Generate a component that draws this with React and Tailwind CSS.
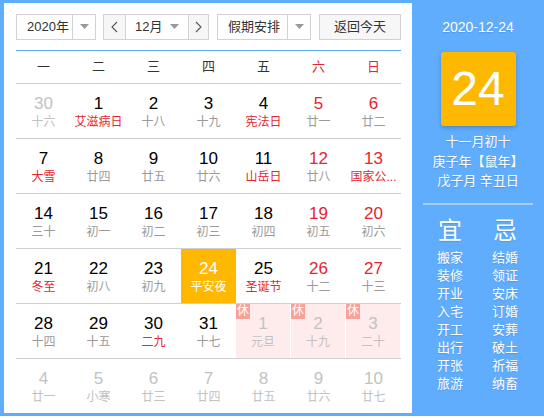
import React from "react";

const FONT = "font-['Liberation_Sans','Noto_Sans_CJK_SC',sans-serif]";

const rows = [
  [
    { d: 30, l: "十六", o: true },
    { d: 1, l: "艾滋病日", lr: true },
    { d: 2, l: "十八" },
    { d: 3, l: "十九" },
    { d: 4, l: "宪法日", lr: true },
    { d: 5, l: "廿一", w: true },
    { d: 6, l: "廿二", w: true },
  ],
  [
    { d: 7, l: "大雪", lr: true },
    { d: 8, l: "廿四" },
    { d: 9, l: "廿五" },
    { d: 10, l: "廿六" },
    { d: 11, l: "山岳日", lr: true },
    { d: 12, l: "廿八", w: true },
    { d: 13, l: "国家公...", w: true, lr: true },
  ],
  [
    { d: 14, l: "三十" },
    { d: 15, l: "初一" },
    { d: 16, l: "初二" },
    { d: 17, l: "初三" },
    { d: 18, l: "初四" },
    { d: 19, l: "初五", w: true },
    { d: 20, l: "初六", w: true },
  ],
  [
    { d: 21, l: "冬至", lr: true },
    { d: 22, l: "初八" },
    { d: 23, l: "初九" },
    { d: 24, l: "平安夜", sel: true },
    { d: 25, l: "圣诞节", lr: true },
    { d: 26, l: "十二", w: true },
    { d: 27, l: "十三", w: true },
  ],
  [
    { d: 28, l: "十四" },
    { d: 29, l: "十五" },
    { d: 30, l: "二九", lr: true },
    { d: 31, l: "十七" },
    { d: 1, l: "元旦", o: true, h: true },
    { d: 2, l: "十九", o: true, h: true },
    { d: 3, l: "二十", o: true, h: true },
  ],
  [
    { d: 4, l: "廿一", o: true },
    { d: 5, l: "小寒", o: true },
    { d: 6, l: "廿三", o: true },
    { d: 7, l: "廿四", o: true },
    { d: 8, l: "廿五", o: true },
    { d: 9, l: "廿六", o: true },
    { d: 10, l: "廿七", o: true },
  ],
];

const yi = ["搬家", "装修", "开业", "入宅", "开工", "出行", "开张", "旅游"];
const ji = ["结婚", "领证", "安床", "订婚", "安葬", "破土", "祈福", "纳畜"];

function Caret() {
  return (
    <svg width="9" height="5" viewBox="0 0 9 5">
      <path d="M0 0 L9 0 L4.5 5 Z" fill="#999" />
    </svg>
  );
}

function Chevron({ dir }) {
  return (
    <svg width="7" height="12" viewBox="0 0 7 12">
      <path
        d={dir === "left" ? "M6 1 L1 6 L6 11" : "M1 1 L6 6 L1 11"}
        fill="none"
        stroke="#555"
        strokeWidth="1.1"
      />
    </svg>
  );
}

function Cell({ c }) {
  let numColor = "text-black";
  let lunColor = "text-[#9a9a9a]";
  if (c.o) {
    numColor = "text-[#c2c2c2]";
    lunColor = "text-[#c2c2c2]";
  } else if (c.sel) {
    numColor = "text-white";
    lunColor = "text-white";
  } else {
    if (c.w) numColor = "text-[#e3262f]";
    if (c.lr) lunColor = "text-[#e3262f]";
  }
  const bg = c.sel ? "bg-[#ffb800]" : c.h ? "bg-[#feecec]" : "";
  return (
    <div className={`relative h-full flex flex-col items-center pt-[10px] ${c.h ? "mr-[1px]" : ""} ${bg}`}>
      {c.h && (
        <div className="absolute left-0 top-0 w-[14px] h-[15px] bg-[#f8a199] text-white text-[12px] leading-[15px] text-center">
          休
        </div>
      )}
      <div className={`text-[17px] leading-[20px] ${numColor}`}>{c.d}</div>
      <div className={`text-[12px] leading-[16px] whitespace-nowrap ${lunColor}`}>{c.l}</div>
    </div>
  );
}

export default function App() {
  const weekdays = ["一", "二", "三", "四", "五", "六", "日"];
  return (
    <div className={`w-[544px] h-[416px] bg-[#60adfd] flex ${FONT}`}>
      <div className="mt-[3px] ml-[4px] mb-[3px] w-[408px] bg-white pl-[12px] pr-[11px] pt-[11px] flex flex-col">
        {/* header */}
        <div className="flex h-[26px] text-[13px] text-[#333]">
          <div className="w-[80px] h-full border border-[#d2d2d2] flex">
            <div className="w-[55px] flex items-center pl-[10px] leading-none">2020年</div>
            <div className="flex-1 border-l border-[#d2d2d2] flex items-center justify-center">
              <Caret />
            </div>
          </div>
          <div className="ml-[7px] w-[106px] h-full border border-[#d2d2d2] flex">
            <div className="w-[22px] bg-[#f6f6f6] border-r border-[#d2d2d2] flex items-center justify-center">
              <Chevron dir="left" />
            </div>
            <div className="w-[62px] flex items-center pl-[9px]">
              <span className="leading-none">12月</span>
              <span className="ml-[8px] flex"><Caret /></span>
            </div>
            <div className="flex-1 bg-[#f6f6f6] border-l border-[#d2d2d2] flex items-center justify-center">
              <Chevron dir="right" />
            </div>
          </div>
          <div className="ml-[8px] w-[94px] h-full border border-[#d2d2d2] flex">
            <div className="w-[69px] flex items-center pl-[10px] leading-none">假期安排</div>
            <div className="flex-1 border-l border-[#d2d2d2] flex items-center justify-center">
              <Caret />
            </div>
          </div>
          <div className="ml-[8px] w-[82px] h-full border border-[#d2d2d2] bg-[#f7f7f7] flex items-center justify-center leading-none">
            返回今天
          </div>
        </div>
        <div className="mt-[10px] h-[1.5px] bg-[#5aaaf8]" />
        {/* weekdays */}
        <div className="grid grid-cols-7 h-[33px] border-b border-[#cfcfcf] text-[13px]">
          {weekdays.map((w, i) => (
            <div key={w} className={`flex items-center justify-center ${i >= 5 ? "text-[#e3262f]" : "text-[#333]"}`}>
              {w}
            </div>
          ))}
        </div>
        {/* days */}
        <div className="flex flex-col">
          {rows.map((r, ri) => (
            <div
              key={ri}
              className={`grid grid-cols-7 ${ri < 5 ? "h-[55px] border-b border-[#cfcfcf]" : "h-[54px]"}`}
            >
              {r.map((c, ci) => (
                <Cell key={ci} c={c} />
              ))}
            </div>
          ))}
        </div>
      </div>
      {/* right panel */}
      <div className="flex-1 flex flex-col items-center pt-[17px] text-white [text-shadow:0_1px_1px_rgba(0,0,0,0.12)]">
        <div className="text-[14px] leading-[20px]">2020-12-24</div>
        <div className="mt-[15px] w-[75px] h-[74px] bg-[#ffb800] rounded-[3px] shadow-[0_2px_4px_rgba(0,0,0,0.2)] flex items-center justify-center text-[48px] leading-none [text-shadow:none]">
          24
        </div>
        <div className="mt-[6px] flex flex-col items-center text-[13px] leading-[19.5px]">
          <div>十一月初十</div>
          <div>庚子年【鼠年】</div>
          <div>戊子月 辛丑日</div>
        </div>
        <div className="mt-[12px] w-[110px] h-[2px] bg-[#a6cffa]" />
        <div className="mt-[12px] grid grid-cols-[55px_55px] ml-[-1px]">
          <div className="text-center text-[24px] leading-[28px]">宜</div>
          <div className="text-center text-[24px] leading-[28px]">忌</div>
          <div className="mt-[4px] flex flex-col items-center text-[13px] leading-[18px]">
            {yi.map((t) => (
              <div key={t}>{t}</div>
            ))}
          </div>
          <div className="mt-[4px] flex flex-col items-center text-[13px] leading-[18px]">
            {ji.map((t) => (
              <div key={t}>{t}</div>
            ))}
          </div>
        </div>
      </div>
    </div>
  );
}
